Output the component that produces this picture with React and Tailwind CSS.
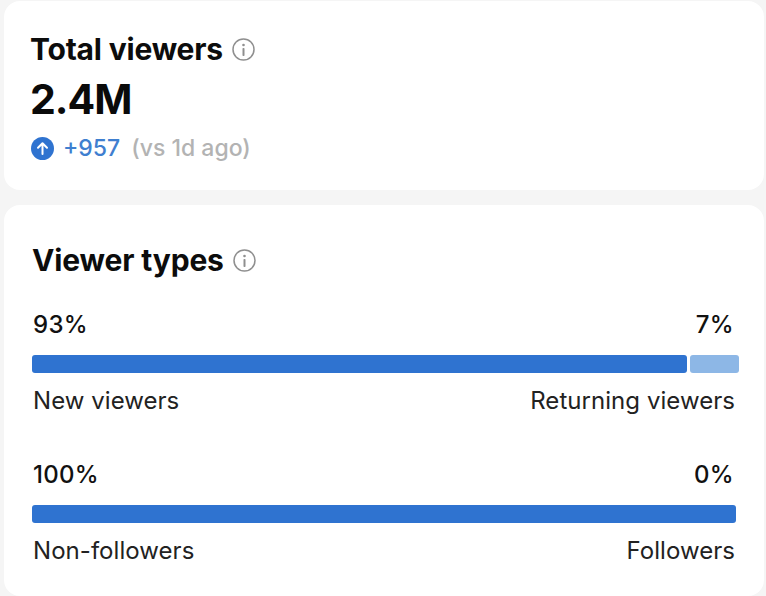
const FONT = "font-['Inter','Liberation_Sans',sans-serif]";

function InfoIcon() {
  return (
    <svg width="23" height="23" viewBox="0 0 23 23" fill="none" className="shrink-0">
      <circle cx="11.5" cy="11.5" r="10.5" stroke="#8f8f8f" strokeWidth="1.5" />
      <circle cx="11.5" cy="7" r="1.3" fill="#8f8f8f" />
      <rect x="10.5" y="10" width="2" height="8" rx="0.8" fill="#8f8f8f" />
    </svg>
  );
}

function UpIcon() {
  return (
    <svg width="23" height="23" viewBox="0 0 23 23" fill="none" className="ml-[1px] shrink-0">
      <circle cx="11.5" cy="11.5" r="11.5" fill="#2f73d0" />
      <path
        d="M11.5 17V6.5M7 10.8l4.5-4.5 4.5 4.5"
        stroke="#fff"
        strokeWidth="2"
        strokeLinecap="round"
        strokeLinejoin="round"
      />
    </svg>
  );
}

function SplitRow({ left, right, leftLabel, rightLabel, segment }) {
  return (
    <div className="flex flex-col">
      <div className="flex h-[30px] items-center justify-between pl-[1px] pr-[2px] text-[24px] font-[550] tracking-[0.3px] text-[#111]">
        <span>{left}</span>
        <span>{right}</span>
      </div>
      <div className={`mt-[15px] flex h-[18px] gap-[3px] ${segment ? "mr-[-3px]" : ""}`}>
        <div className="flex-1 rounded-[3px] bg-[#2f73d0]" />
        {segment && <div className="w-[49px] rounded-[3px] bg-[#8db7e6]" />}
      </div>
      <div className="mt-[13px] flex h-[30px] items-center justify-between pl-[1px] pr-[1px] text-[24px] tracking-[0.05px] text-[#222]">
        <span>{leftLabel}</span>
        <span>{rightLabel}</span>
      </div>
    </div>
  );
}

export default function App() {
  return (
    <div className={`${FONT} flex h-[596px] w-[766px] flex-col gap-[15px] overflow-hidden bg-[#f5f5f5] pl-[4px] pr-[2px] pt-[1px]`}>
      <section className="h-[189px] shrink-0 rounded-[16px] bg-white pl-[26px] pt-[30px]">
        <div className="flex h-[36px] items-center gap-[9px]">
          <h2 className="text-[30px] font-bold tracking-[-0.2px] text-[#0c0c0c]">Total viewers</h2>
          <InfoIcon />
        </div>
        <div className="mt-[6px] h-[52px] text-[41px] font-bold leading-[52px] tracking-[-1px] text-[#0a0a0a]">2.4M</div>
        <div className="mt-[8px] flex h-[30px] items-center text-[23px] font-medium">
          <UpIcon />
          <span className="ml-[9px] text-[#3f7fd0]">+957</span>
          <span className="ml-[11px] text-[#b3b3b3]">(vs 1d ago)</span>
        </div>
      </section>

      <section className="flex-1 rounded-[16px] bg-white pl-[28px] pr-[28px] pt-[37px]">
        <div className="flex h-[36px] items-center gap-[9px]">
          <h2 className="text-[30px] font-bold tracking-[-0.15px] text-[#0c0c0c]">Viewer types</h2>
          <InfoIcon />
        </div>
        <div className="mt-[32px] flex flex-col gap-[44px]">
          <SplitRow left="93%" right="7%" leftLabel="New viewers" rightLabel="Returning viewers" segment />
          <SplitRow left="100%" right="0%" leftLabel="Non-followers" rightLabel="Followers" />
        </div>
      </section>
    </div>
  );
}
